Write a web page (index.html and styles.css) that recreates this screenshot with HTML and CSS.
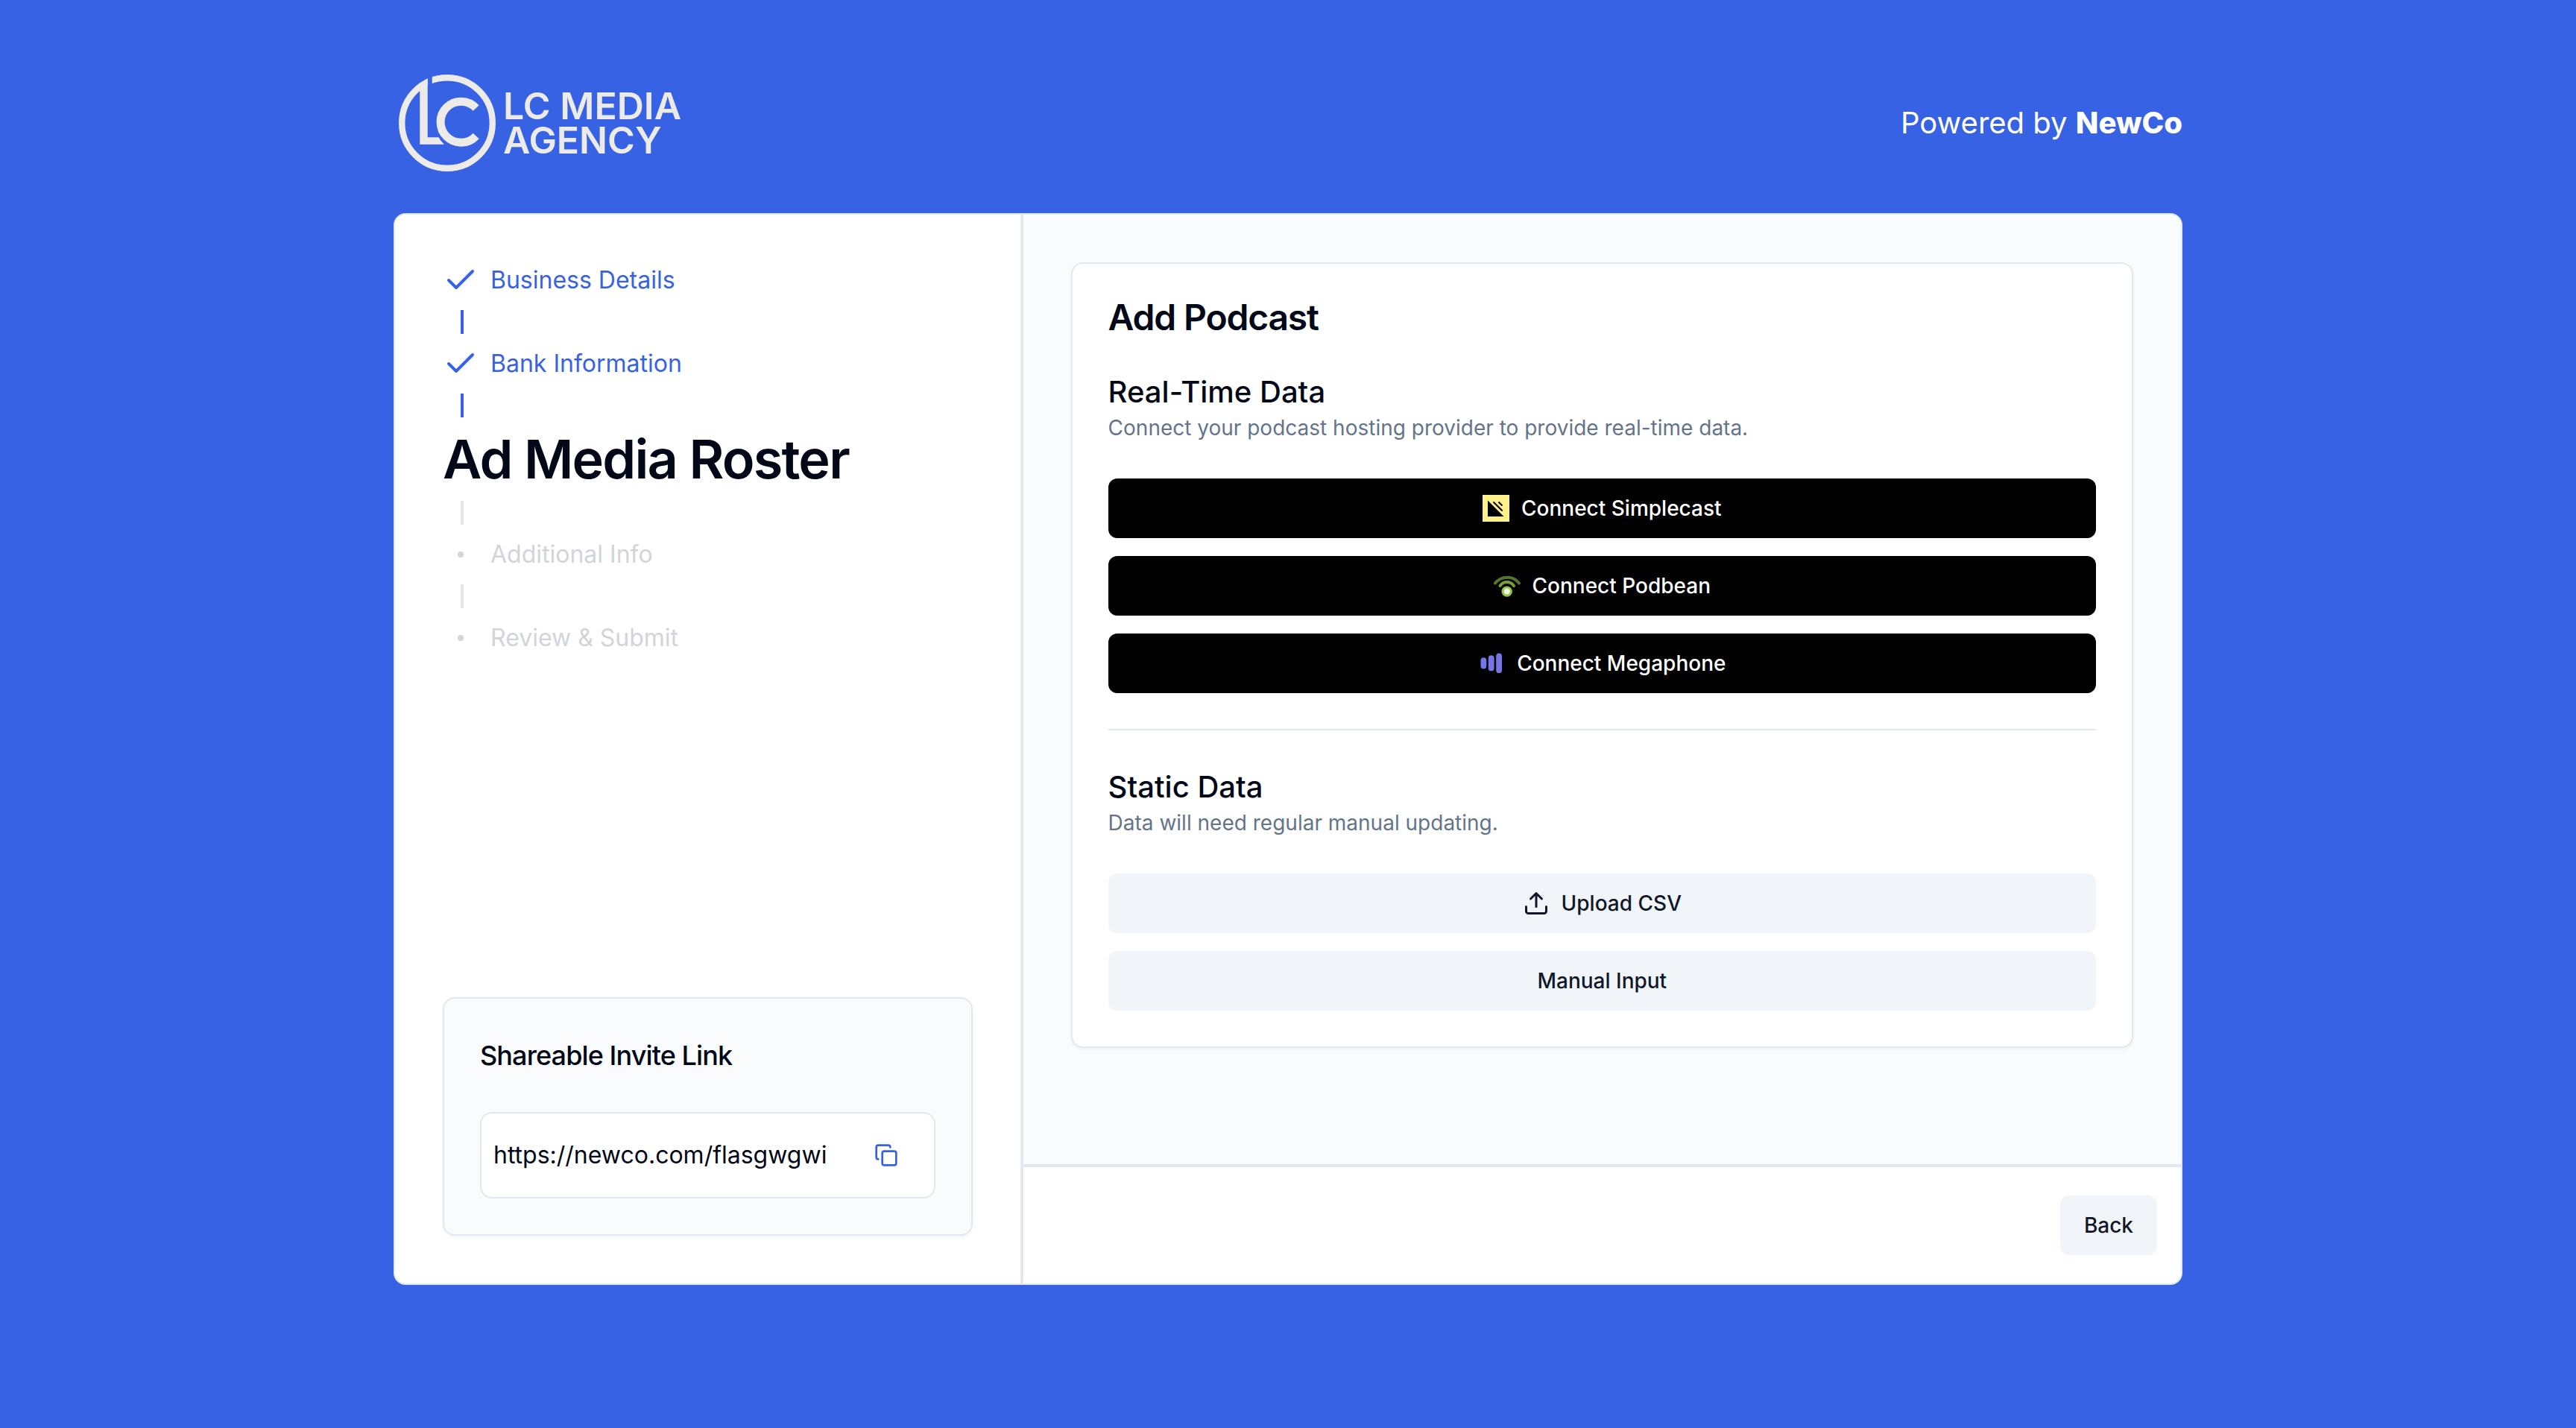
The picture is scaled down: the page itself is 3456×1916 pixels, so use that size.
FILE: index.html
```html
<!DOCTYPE html>
<html lang="en">
<head>
<meta charset="utf-8">
<meta name="viewport" content="width=device-width, initial-scale=1">
<title>Add Podcast – LC Media Agency</title>
<link rel="stylesheet" href="styles.css">
</head>
<body>
<div class="page">
  <header class="header">
    <div class="logo">
      <svg class="logo-mark" viewBox="0 0 130 130" aria-hidden="true">
        <clipPath id="ring-gap"><path d="M0 0H38.7V40H44.7V0H130V130H0Z"/></clipPath>
        <circle cx="65" cy="65" r="60.8" fill="none" stroke="currentColor" stroke-width="8.4" clip-path="url(#ring-gap)"/>
        <path fill="currentColor" d="M28.3 93.7V20L33 12L38.7 5.7V84.3H53.5Q56.5 90 61 93.7Z"/>
        <path fill="none" stroke="currentColor" stroke-width="11" d="M103.7 45A27.5 27.5 0 1 0 103.7 82.4"/>
      </svg>
      <div class="logo-name">
        <div>LC MEDIA</div>
        <div>AGENCY</div>
      </div>
    </div>
    <p class="powered">Powered by <strong>NewCo</strong></p>
  </header>

  <div class="panel">
    <aside class="sidebar">
      <ol class="steps">
        <li class="step done">
          <svg class="step-icon" viewBox="0 0 24 24" aria-hidden="true"><path d="M20 6 9 17l-5-5"/></svg>
          <span>Business Details</span>
        </li>
        <li class="connector done" aria-hidden="true"></li>
        <li class="step done">
          <svg class="step-icon" viewBox="0 0 24 24" aria-hidden="true"><path d="M20 6 9 17l-5-5"/></svg>
          <span>Bank Information</span>
        </li>
        <li class="connector done" aria-hidden="true"></li>
        <li class="step-current" aria-current="step"><h1>Ad Media Roster</h1></li>
        <li class="connector" aria-hidden="true"></li>
        <li class="step">
          <svg class="step-icon" viewBox="0 0 24 24" aria-hidden="true"><circle cx="12" cy="12" r="1"/></svg>
          <span>Additional Info</span>
        </li>
        <li class="connector" aria-hidden="true"></li>
        <li class="step">
          <svg class="step-icon" viewBox="0 0 24 24" aria-hidden="true"><circle cx="12" cy="12" r="1"/></svg>
          <span>Review &amp; Submit</span>
        </li>
      </ol>

      <section class="card invite">
        <label class="invite-title" for="invite-link">Shareable Invite Link</label>
        <div class="invite-field">
          <input id="invite-link" class="invite-input" type="text" value="https://newco.com/flasgwgwi" readonly>
          <button class="copy" type="button" aria-label="Copy link">
            <svg class="copy-icon" viewBox="0 0 24 24" aria-hidden="true"><rect x="8" y="8" width="14" height="14" rx="2"/><path d="M4 16c-1.1 0-2-.9-2-2V4c0-1.1.9-2 2-2h10c1.1 0 2 .9 2 2"/></svg>
          </button>
        </div>
      </section>
    </aside>

    <main class="main">
      <div class="content">
        <section class="card podcast">
          <h2 class="card-title">Add Podcast</h2>
          <div class="group">
            <div class="group-head">
              <h3>Real-Time Data</h3>
              <p>Connect your podcast hosting provider to provide real-time data.</p>
            </div>
            <div class="actions">
              <button class="btn dark" type="button">
                <svg class="btn-icon" viewBox="0 0 36 36" aria-hidden="true">
                  <rect width="36" height="36" fill="#fff08a"/>
                  <path fill="#000" d="M7 7.500V29H28.500Z"/>
                  <path stroke="#000" stroke-width="2" d="M14.500 9.500L26.700 21.500M21.500 9.500L26.500 14.500"/>
                </svg>
                Connect Simplecast
              </button>
              <button class="btn dark" type="button">
                <svg class="btn-icon" viewBox="0 0 36 36" aria-hidden="true">
                  <g fill="none" stroke-linecap="round" stroke-width="4">
                    <path stroke="#55742c" d="M2 14.500C10 4 26 4 34 14.500"/>
                    <path stroke="#74a035" d="M8.500 18C13 11.300 22.500 11.300 27 18"/>
                  </g>
                  <circle cx="17.700" cy="25.600" r="7.200" fill="#91c840"/>
                  <circle cx="17.700" cy="25.600" r="4" fill="#eff5ea"/>
                </svg>
                Connect Podbean
              </button>
              <button class="btn dark" type="button">
                <svg class="btn-icon" viewBox="0 0 36 36" aria-hidden="true" fill="#7575e6">
                  <rect x="3.500" y="10.300" width="7.800" height="15" rx="3.900"/>
                  <rect x="13.800" y="7.300" width="7.800" height="21" rx="3.900"/>
                  <rect x="24.200" y="4.500" width="7.800" height="26.600" rx="3.900"/>
                </svg>
                Connect Megaphone
              </button>
            </div>
          </div>
          <hr class="rule">
          <div class="group">
            <div class="group-head">
              <h3>Static Data</h3>
              <p>Data will need regular manual updating.</p>
            </div>
            <div class="actions">
              <button class="btn light" type="button">
                <svg class="btn-icon line" viewBox="0 0 24 24" aria-hidden="true"><path d="M21 15v4a2 2 0 0 1-2 2H5a2 2 0 0 1-2-2v-4M17 8l-5-5-5 5M12 3v12"/></svg>
                Upload CSV
              </button>
              <button class="btn light" type="button">Manual Input</button>
            </div>
          </div>
        </section>
      </div>
      <footer class="footer">
        <button class="btn light" type="button">Back</button>
      </footer>
    </main>
  </div>
</div>
</body>
</html>
```
FILE: styles.css
```css
:root {
  --blue: #3762e4;
  --ink: #020817;
  --border: #e2e8f0;
  --subtle: #f9fbfd;
}

* {
  box-sizing: border-box;
  margin: 0;
  padding: 0;
}

body {
  background: var(--blue);
  color: var(--ink);
  font-family: Inter, "Liberation Sans", sans-serif;
  font-size: 32px;
  line-height: 48px;
}

button,
input {
  font: inherit;
  color: inherit;
  border: 0;
  background: none;
}

.page {
  display: flex;
  flex-direction: column;
  width: calc(100% - 96px);
  max-width: 2400px;
  min-height: 100vh;
  margin: 0 auto;
  padding-bottom: 192px;
}

.header {
  display: flex;
  align-items: center;
  justify-content: space-between;
  padding: 100px 0 56px;
}

.logo {
  display: flex;
  align-items: center;
  gap: 10px;
  padding-left: 7px;
  color: #ecebea;
}

.logo-mark {
  width: 130px;
  height: 130px;
}

.logo-name {
  font-size: 50px;
  font-weight: 600;
  line-height: 46px;
}

.powered {
  color: #fff;
  font-size: 40px;
  line-height: 56px;
}

.powered strong {
  font-weight: 800;
}

.panel {
  display: flex;
  flex: 1;
  overflow: hidden;
  background: #fff;
  border: 2px solid var(--border);
  border-radius: 16px;
}

.sidebar {
  display: flex;
  flex-direction: column;
  justify-content: space-between;
  width: 35%;
  padding: 64px;
}

.steps {
  display: flex;
  flex-direction: column;
  gap: 16px;
  list-style: none;
}

.step {
  display: flex;
  align-items: center;
  gap: 16px;
  color: #d1d5db;
}

.step.done {
  color: var(--blue);
}

.step-icon,
.copy-icon,
.line {
  fill: none;
  stroke: currentColor;
  stroke-width: 2;
  stroke-linecap: round;
  stroke-linejoin: round;
}

.step-icon {
  width: 48px;
  height: 48px;
}

.connector {
  width: 4px;
  height: 32px;
  margin-left: 24px;
  background: var(--border);
}

.connector.done {
  background: var(--blue);
}

.step-current h1 {
  font-size: 72px;
  font-weight: 600;
  line-height: 80px;
  letter-spacing: -0.025em;
  white-space: nowrap;
}

.card {
  border: 2px solid var(--border);
  border-radius: 16px;
  padding: 48px;
  box-shadow: 0 2px 4px rgba(0, 0, 0, 0.05);
}

.invite {
  display: flex;
  flex-direction: column;
  gap: 48px;
  background: var(--subtle);
}

.invite-title {
  font-size: 36px;
  font-weight: 500;
  line-height: 56px;
  letter-spacing: -0.025em;
}

.invite-field {
  display: flex;
  align-items: center;
  padding: 16px;
  background: #fff;
  border: 2px solid var(--border);
  border-radius: 16px;
}

.invite-input {
  flex: 1;
  min-width: 0;
}

.copy {
  display: flex;
  align-items: center;
  justify-content: center;
  width: 96px;
  height: 80px;
  color: var(--blue);
}

.copy-icon {
  width: 32px;
  height: 32px;
}

.main {
  display: flex;
  flex: 1;
  flex-direction: column;
  min-width: 0;
  border-left: 4px solid var(--border);
}

.content {
  flex: 1;
  padding: 64px;
  background: var(--subtle);
}

.podcast {
  display: flex;
  flex-direction: column;
  gap: 48px;
  background: #fff;
}

.card-title {
  font-size: 48px;
  font-weight: 600;
  line-height: 48px;
  letter-spacing: -0.025em;
}

.group {
  display: flex;
  flex-direction: column;
  gap: 48px;
}

.group-head h3 {
  font-size: 40px;
  font-weight: 500;
  line-height: 56px;
}

.group-head p {
  color: #64748b;
  font-size: 28px;
  line-height: 40px;
}

.actions {
  display: flex;
  flex-direction: column;
  gap: 24px;
}

.btn {
  display: flex;
  align-items: center;
  justify-content: center;
  gap: 16px;
  height: 80px;
  padding: 0 32px;
  border-radius: 12px;
  font-size: 28px;
  font-weight: 500;
  line-height: 40px;
}

.btn.dark {
  background: #000;
  color: #fff;
}

.btn.light {
  background: #f1f5f9;
  color: #0f172a;
}

.btn-icon {
  width: 36px;
  height: 36px;
}

.rule {
  height: 2px;
  border: 0;
  background: var(--border);
}

.footer {
  display: flex;
  justify-content: flex-end;
  padding: 38px 32px;
  border-top: 4px solid var(--border);
}
```
